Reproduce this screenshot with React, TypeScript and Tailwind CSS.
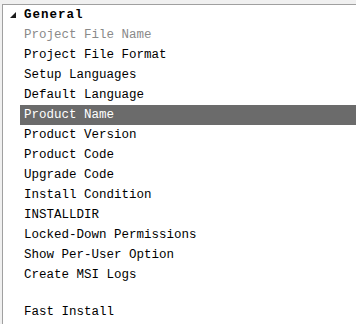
import React from "react";

const items: { label: string; dim?: boolean; selected?: boolean }[] = [
  { label: "Project File Name", dim: true },
  { label: "Project File Format" },
  { label: "Setup Languages" },
  { label: "Default Language" },
  { label: "Product Name", selected: true },
  { label: "Product Version" },
  { label: "Product Code" },
  { label: "Upgrade Code" },
  { label: "Install Condition" },
  { label: "INSTALLDIR" },
  { label: "Locked-Down Permissions" },
  { label: "Show Per-User Option" },
  { label: "Create MSI Logs" },
];

export default function App() {
  return (
    <div
      className="w-[356px] h-[324px] overflow-hidden bg-[#f0f0f0] pt-[4px] pl-[2px] flex"
      style={{ fontFamily: '"Liberation Mono", "DejaVu Sans Mono", monospace' }}
    >
      <div className="flex-1 bg-white border-t border-l border-[#a0a0a0] flex flex-col text-[12.5px] leading-[20px] text-black">
        <div className="h-[20px] flex items-center">
          <svg width="6" height="6" viewBox="0 0 6 6" className="ml-[7px] mr-[8px]">
            <polygon points="6,0 6,6 0,6" fill="#1a1a1a" />
          </svg>
          <span className="font-bold tracking-[1px]">General</span>
        </div>
        {items.map((it) => (
          <div key={it.label} className="h-[20px] flex items-center pl-[17px]">
            <div
              className={
                it.selected
                  ? "flex-1 h-[20px] flex items-center pl-[4px] bg-[#6b6b6b] text-white"
                  : "flex-1 h-[20px] flex items-center pl-[4px] " + (it.dim ? "text-[#8a8a8a]" : "")
              }
            >
              {it.label}
            </div>
          </div>
        ))}
        <div className="h-[17px]" />
        <div className="h-[20px] flex items-center pl-[21px]">Fast Install</div>
      </div>
    </div>
  );
}
